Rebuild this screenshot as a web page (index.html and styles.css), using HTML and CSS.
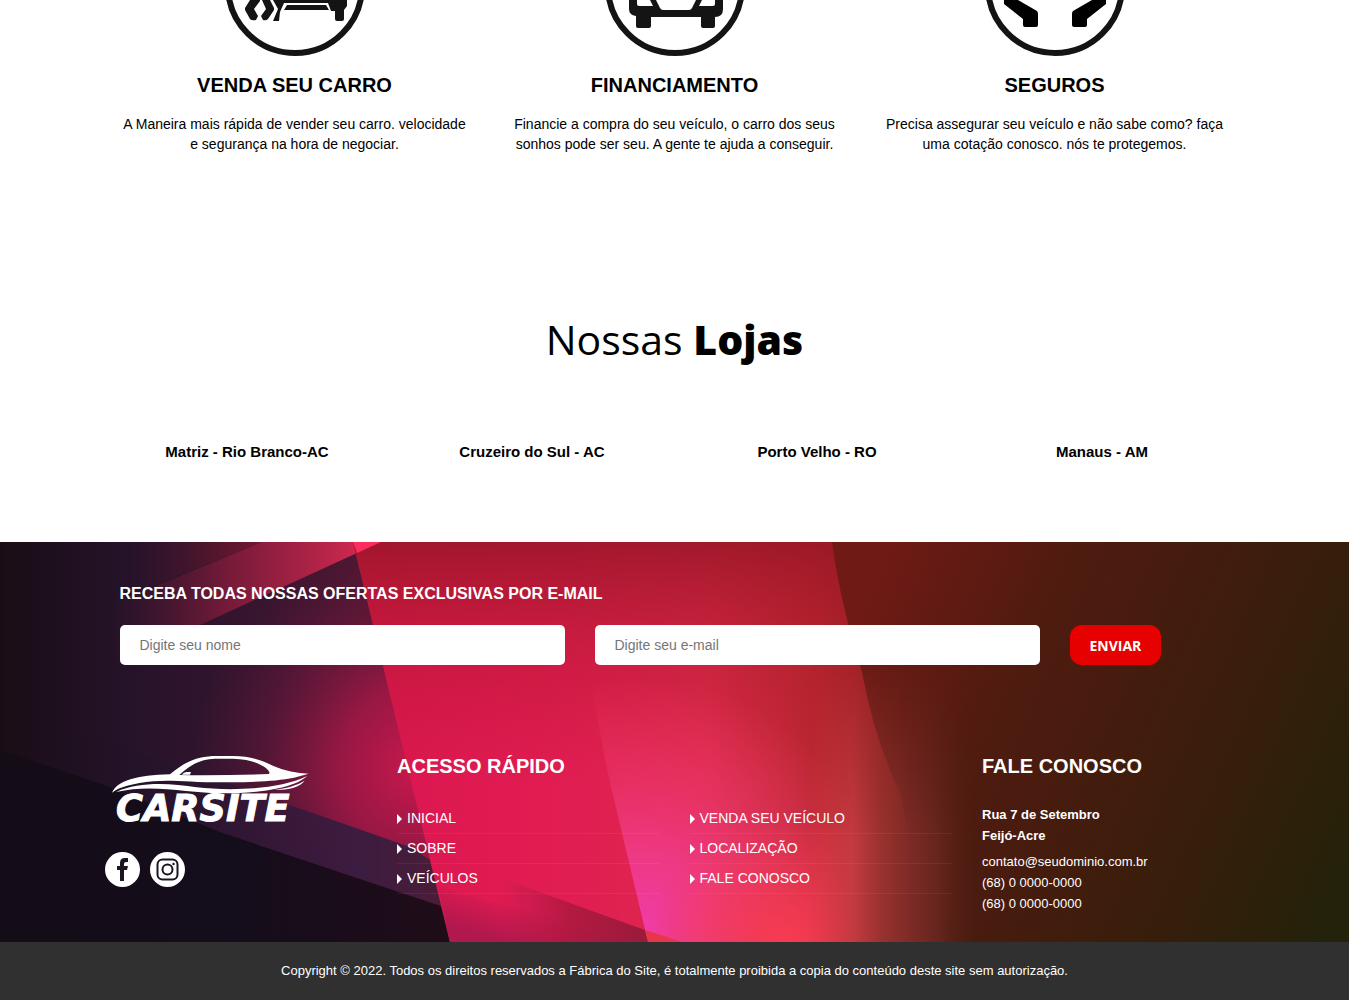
FILE: index.html
```html
<!DOCTYPE html>
<html lang="pt-br">
<head>
    <meta charset="UTF-8">
    <meta name="viewport" content="width=device-width, initial-scale=1.0">
    <title>Carsite</title>
    <link rel="stylesheet" href="styles.css">
</head>
<body>
    <main>
        <section class="container servicos">
            <div class="servico">
                <svg class="servico-icone" viewBox="0 0 140 56" aria-hidden="true">
                    <circle cx="70" cy="-14" r="67" fill="none" stroke="#141414" stroke-width="6"/>
                    <path d="M25 0L20 8V10L25 19Q27 21 31 20L33 16L29 9L35 1V0ZM37 0L41 9L36 16L38 20Q41 21 43 19L49 10V8L45 0Z" fill="#141414"/>
                    <path d="M48 0H122V6L119 10V19Q119 21 117 21H112Q110 21 110 19V11H106L103 3H59L55 12L54 21H48L53 9ZM62 5H101L104 10H59Z" fill="#141414"/>
                </svg>
                <h3>VENDA SEU CARRO</h3>
                <p>A Maneira mais rápida de vender seu carro. velocidade e segurança na hora de negociar.</p>
            </div>
            <div class="servico">
                <svg class="servico-icone" viewBox="0 0 140 56" aria-hidden="true">
                    <circle cx="70" cy="-14" r="67" fill="none" stroke="#141414" stroke-width="6"/>
                    <path d="M24 0H32V4Q32 6 34 6H48L45 0H51L55 8Q56 10 58 10H84Q86 10 87 8L91 0H97L94 6H108Q110 6 110 4V0H118V9Q118 17 110 17V26Q110 28 108 28H98Q96 28 96 26V17H46V26Q46 28 44 28H33Q31 28 31 26V16Q24 15 24 9Z" fill="#141414"/>
                </svg>
                <h3>FINANCIAMENTO</h3>
                <p>Financie a compra do seu veículo, o carro dos seus sonhos pode ser seu. A gente te ajuda a conseguir.</p>
            </div>
            <div class="servico">
                <svg class="servico-icone" viewBox="0 0 140 56" aria-hidden="true">
                    <circle cx="70" cy="-14" r="67" fill="none" stroke="#141414" stroke-width="6"/>
                    <path d="M19 0H33L52 11Q53 12 53 14V25Q53 27 51 27H40Q38 27 38 25V19L19 4ZM121 0H107L88 11Q87 12 87 14V25Q87 27 89 27H100Q102 27 102 25V19L121 4Z"/>
                </svg>
                <h3>SEGUROS</h3>
                <p>Precisa assegurar seu veículo e não sabe como? faça uma cotação conosco. nós te protegemos.</p>
            </div>
        </section>

        <section class="container lojas">
            <h2>Nossas <strong>Lojas</strong></h2>
            <ul class="lojas-lista">
                <li>Matriz - Rio Branco-AC</li>
                <li>Cruzeiro do Sul - AC</li>
                <li>Porto Velho - RO</li>
                <li>Manaus - AM</li>
            </ul>
        </section>
    </main>

    <footer>
        <div class="rodape">
            <svg class="rodape-fundo" viewBox="0 0 1349 400" preserveAspectRatio="none" aria-hidden="true">
                <defs>
                    <linearGradient id="base" gradientUnits="userSpaceOnUse" x1="0" y1="0" x2="450" y2="0">
                        <stop offset="0" stop-color="#190d15"/>
                        <stop offset=".3" stop-color="#26132a"/>
                        <stop offset=".6" stop-color="#38152f"/>
                        <stop offset="1" stop-color="#641834"/>
                    </linearGradient>
                    <radialGradient id="clarao" gradientUnits="userSpaceOnUse" cx="420" cy="225" r="230">
                        <stop offset="0" stop-color="#cc184e"/>
                        <stop offset=".35" stop-color="#aa1848" stop-opacity=".8"/>
                        <stop offset=".7" stop-color="#7c183f" stop-opacity=".35"/>
                        <stop offset="1" stop-color="#60183c" stop-opacity="0"/>
                    </radialGradient>
                    <linearGradient id="feixe" gradientUnits="userSpaceOnUse" x1="110" y1="0" x2="380" y2="0">
                        <stop offset="0" stop-color="#5c1830" stop-opacity="0"/>
                        <stop offset=".45" stop-color="#8a1c3c" stop-opacity=".8"/>
                        <stop offset="1" stop-color="#e02a54"/>
                    </linearGradient>
                    <linearGradient id="feixe2" gradientUnits="userSpaceOnUse" x1="130" y1="0" x2="270" y2="0">
                        <stop offset="0" stop-color="#4c1428" stop-opacity="0"/>
                        <stop offset="1" stop-color="#7c192f"/>
                    </linearGradient>
                    <linearGradient id="faixa" gradientUnits="userSpaceOnUse" x1="60" y1="0" x2="440" y2="0">
                        <stop offset="0" stop-color="#1a0f20" stop-opacity="0"/>
                        <stop offset=".45" stop-color="#2c1634" stop-opacity=".8"/>
                        <stop offset=".8" stop-color="#3c1c40"/>
                        <stop offset="1" stop-color="#4c1c38"/>
                    </linearGradient>
                    <linearGradient id="chao" gradientUnits="userSpaceOnUse" x1="0" y1="0" x2="450" y2="0">
                        <stop offset="0" stop-color="#140c16"/>
                        <stop offset=".5" stop-color="#140d1b"/>
                        <stop offset="1" stop-color="#200c19"/>
                    </linearGradient>
                    <linearGradient id="rosa" gradientUnits="userSpaceOnUse" x1="350" y1="0" x2="900" y2="0">
                        <stop offset="0" stop-color="#db1650"/>
                        <stop offset=".4" stop-color="#e11d52"/>
                        <stop offset=".65" stop-color="#dd2a4c"/>
                        <stop offset=".85" stop-color="#b82830"/>
                        <stop offset="1" stop-color="#842420"/>
                    </linearGradient>
                    <linearGradient id="topo" x1="0" y1="0" x2="0" y2="1">
                        <stop offset="0" stop-color="#981626" stop-opacity=".85"/>
                        <stop offset=".25" stop-color="#a81828" stop-opacity=".4"/>
                        <stop offset=".6" stop-color="#b01828" stop-opacity="0"/>
                    </linearGradient>
                    <linearGradient id="escuro" gradientUnits="userSpaceOnUse" x1="840" y1="100" x2="1349" y2="330">
                        <stop offset="0" stop-color="#701a15"/>
                        <stop offset=".3" stop-color="#501b10"/>
                        <stop offset=".65" stop-color="#3c1d0c"/>
                        <stop offset="1" stop-color="#24220a"/>
                    </linearGradient>
                    <linearGradient id="brilho" gradientUnits="userSpaceOnUse" x1="810" y1="0" x2="980" y2="0">
                        <stop offset="0" stop-color="#e04048" stop-opacity="0"/>
                        <stop offset=".25" stop-color="#c43a40"/>
                        <stop offset=".42" stop-color="#98322e"/>
                        <stop offset=".6" stop-color="#7c2a26"/>
                        <stop offset=".75" stop-color="#66251f"/>
                        <stop offset="1" stop-color="#501f14" stop-opacity="0"/>
                    </linearGradient>
                    <linearGradient id="subida" x1="0" y1="0" x2="0" y2="1">
                        <stop offset=".3" stop-color="#000"/>
                        <stop offset=".75" stop-color="#fff"/>
                    </linearGradient>
                    <mask id="mascara"><rect width="1349" height="400" fill="url(#subida)"/></mask>
                    <radialGradient id="magenta" gradientUnits="userSpaceOnUse" cx="640" cy="385" r="250">
                        <stop offset="0" stop-color="#f03ca8"/>
                        <stop offset=".3" stop-color="#f03c8c" stop-opacity=".85"/>
                        <stop offset=".6" stop-color="#ee3a74" stop-opacity=".5"/>
                        <stop offset="1" stop-color="#ee3a60" stop-opacity="0"/>
                    </radialGradient>
                    <radialGradient id="coral" gradientUnits="userSpaceOnUse" cx="785" cy="410" r="140">
                        <stop offset="0" stop-color="#fa3c50"/>
                        <stop offset="1" stop-color="#f03c50" stop-opacity="0"/>
                    </radialGradient>
                    <linearGradient id="cunha" gradientUnits="userSpaceOnUse" x1="500" y1="0" x2="640" y2="0">
                        <stop offset="0" stop-color="#b0184a" stop-opacity="0"/>
                        <stop offset=".5" stop-color="#a8183e" stop-opacity=".8"/>
                        <stop offset="1" stop-color="#9c1a3c"/>
                    </linearGradient>
                    <linearGradient id="cunha2" gradientUnits="userSpaceOnUse" x1="480" y1="350" x2="468" y2="390">
                        <stop offset="0" stop-color="#b0184e" stop-opacity="0"/>
                        <stop offset="1" stop-color="#b0184e"/>
                    </linearGradient>
                </defs>
                <rect width="1349" height="400" fill="url(#base)"/>
                <rect x="180" width="270" height="400" fill="url(#clarao)"/>
                <path d="M262 0L100 65V0Z" fill="url(#feixe2)"/>
                <path d="M381 0L200 83L100 125V67L262 0Z" fill="url(#feixe)"/>
                <path d="M0 160L190 228L410 305L430 318L441 364L220 290L110 245L0 208Z" fill="url(#faixa)"/>
                <path d="M0 208L110 245L220 290L441 364L450 400H0Z" fill="url(#chao)"/>
                <path d="M353 0H940V400H450Z" fill="url(#rosa)"/>
                <path d="M353 0H940V400H450Z" fill="url(#topo)"/>
                <path d="M353 0H381L357 11Z" fill="#f92e5e"/>
                <path d="M590 130Q600 200 617 270L648 400H890V130Z" fill="url(#magenta)"/>
                <path d="M648 240H940V400H648Z" fill="url(#coral)"/>
                <path d="M832 0Q840 60 862 130Q875 200 900 250L930 400H1349V0Z" fill="url(#escuro)"/>
                <rect x="810" width="170" height="400" fill="url(#brilho)" mask="url(#mascara)"/>
                <path d="M438 345L530 370L620 400H450Z" fill="url(#cunha2)"/>
                <path d="M500 336L645 388L648 400H500Z" fill="url(#cunha)"/>
                <path d="M645 388L682 400H648Z" fill="#e8354a"/>
            </svg>

            <div class="container rodape-conteudo">
                <form class="newsletter">
                    <h4>RECEBA TODAS NOSSAS OFERTAS EXCLUSIVAS POR E-MAIL</h4>
                    <div class="newsletter-campos">
                        <input type="text" name="nome" placeholder="Digite seu nome" aria-label="Digite seu nome">
                        <input type="email" name="email" placeholder="Digite seu e-mail" aria-label="Digite seu e-mail">
                        <div><button type="submit">ENVIAR</button></div>
                    </div>
                </form>

                <div class="colunas">
                    <div class="marca">
                        <a href="index.html" aria-label="Carsite">
                            <svg class="logo" viewBox="45 30 630 225" fill="#fff">
                                <path fill-rule="evenodd" d="M66 158C82 122 140 106 240 103C290 60 330 48 380 48H430C480 48 520 62 550 78C585 93 620 100 656 101L612 113C560 123 500 126 420 127C300 128 250 118 190 124C130 130 90 140 66 158ZM268 105C300 75 330 57 375 56H430C480 57 512 72 530 86C540 95 540 100 536 102Q400 107 268 105Z"/>
                                <path d="M275 104Q282 96 290 96H303L300 104Z"/>
                                <path d="M78 156C150 124 240 130 320 142C410 152 560 152 652 108C610 146 500 160 400 160C290 160 190 130 78 156Z"/>
                                <path d="M552 149Q610 143 644 122Q620 152 552 149Z"/>
                                <text class="logo-texto" x="78" y="242">CARSITE</text>
                            </svg>
                        </a>
                        <div class="redes">
                            <a href="#" aria-label="Facebook">
                                <svg viewBox="0 0 35 35">
                                    <circle cx="17.500" cy="17.500" r="17.500" fill="#fff"/>
                                    <path d="M15 29V18H12V14H15V11Q15 6 20 6H23V10H21Q19 10 19 12V14H23L22 18H19V29Z" fill="#1c1520"/>
                                </svg>
                            </a>
                            <a href="#" aria-label="Instagram">
                                <svg viewBox="0 0 35 35" fill="none" stroke="#1c1520" stroke-width="2">
                                    <circle cx="17.500" cy="17.500" r="17.500" fill="#fff" stroke="none"/>
                                    <rect x="7.500" y="7.500" width="20" height="20" rx="5"/>
                                    <circle cx="17.500" cy="17.500" r="5"/>
                                    <circle cx="23.500" cy="12" r="1.200" fill="#1c1520" stroke="none"/>
                                </svg>
                            </a>
                        </div>
                    </div>
                    <nav class="acesso">
                        <h3>ACESSO RÁPIDO</h3>
                        <ul>
                            <li><a href="index.html">INICIAL</a></li>
                            <li><a href="venda.html">VENDA SEU VEÍCULO</a></li>
                            <li><a href="sobre.html">SOBRE</a></li>
                            <li><a href="localizacao.html">LOCALIZAÇÃO</a></li>
                            <li><a href="veiculos.html">VEÍCULOS</a></li>
                            <li><a href="contato.html">FALE CONOSCO</a></li>
                        </ul>
                    </nav>
                    <div class="contato">
                        <h3>FALE CONOSCO</h3>
                        <p><strong>Rua 7 de Setembro<br>Feijó-Acre</strong></p>
                        <p>contato@seudominio.com.br<br>(68) 0 0000-0000<br>(68) 0 0000-0000</p>
                    </div>
                </div>
            </div>
        </div>
        <div class="copyright">Copyright © 2022. Todos os direitos reservados a Fábrica do Site, é totalmente proibida a copia do conteúdo deste site sem autorização.</div>
    </footer>
</body>
</html>
```

FILE: styles.css
```css
* {
    box-sizing: border-box;
}
body {
    margin: 0;
    font-family: "Liberation Sans", Arial, sans-serif;
    font-size: 14px;
    line-height: 20px;
    color: #000;
    background-color: #fff;
}
h2, h3, h4, p, ul {
    margin: 0;
    padding: 0;
}
ul {
    list-style: none;
}
a {
    color: #fff;
    text-decoration: none;
}
.container {
    max-width: 1140px;
    margin: 0 auto;
}

/* servicos */
.servicos {
    display: grid;
    grid-template-columns: repeat(3, 1fr);
    text-align: center;
}
.servico {
    padding: 0 15px;
}
.servico-icone {
    display: block;
    width: 140px;
    height: 56px;
    margin: 0 auto 16px;
}
.servico h3 {
    font-size: 20px;
    line-height: 26px;
    margin-bottom: 16px;
}

/* lojas */
.lojas {
    padding: 155px 0 80px;
    text-align: center;
}
.lojas h2 {
    font-family: "Open Sans", sans-serif;
    font-size: 41px;
    font-weight: 400;
    line-height: 60px;
    margin-bottom: 73px;
}
.lojas h2 strong {
    font-weight: 800;
}
.lojas-lista {
    display: grid;
    grid-template-columns: repeat(4, 1fr);
    font-size: 15px;
    font-weight: bold;
}

/* rodape */
.rodape {
    position: relative;
    color: #fff;
    background-color: #190d15;
}
.rodape-fundo {
    position: absolute;
    top: 0;
    left: 0;
    width: 100%;
    height: 100%;
}
.rodape-conteudo {
    position: relative;
    padding: 42px 0 23px;
}
.newsletter {
    padding: 0 15px;
}
.newsletter h4 {
    font-size: 16px;
    margin-bottom: 21px;
}
.newsletter-campos {
    display: grid;
    grid-template-columns: minmax(0, 445px) minmax(0, 445px) auto;
    gap: 30px;
}
.newsletter input {
    width: 100%;
    height: 40px;
    padding: 0 20px;
    border: 0;
    border-radius: 5px;
    font-family: inherit;
    font-size: 14px;
    background-color: #fff;
}
.newsletter input::placeholder {
    color: #757575;
}
.newsletter button {
    height: 40px;
    padding: 0 20px;
    border: 0;
    border-radius: 12px;
    font-family: "Open Sans", sans-serif;
    font-size: 14px;
    font-weight: 700;
    color: #fff;
    background-color: #e60000;
    cursor: pointer;
}
.colunas {
    display: grid;
    grid-template-columns: repeat(4, 1fr);
    column-gap: 30px;
    padding-top: 85px;
}
.logo {
    display: block;
    width: 210px;
    height: 75px;
    margin-bottom: 27px;
    overflow: visible;
}
.logo-texto {
    font-family: "DejaVu Sans", sans-serif;
    font-size: 110px;
    font-weight: bold;
    font-style: italic;
    stroke: #fff;
    stroke-width: 3px;
}
.redes {
    display: flex;
    gap: 10px;
}
.redes svg {
    display: block;
    width: 35px;
    height: 35px;
}
.acesso {
    grid-column: span 2;
}
.colunas h3 {
    font-size: 20px;
    line-height: 32px;
    margin-bottom: 22px;
}
.acesso ul {
    display: grid;
    grid-template-columns: repeat(2, 1fr);
    column-gap: 30px;
}
.acesso li {
    border-bottom: 1px solid rgba(255, 255, 255, 0.06);
}
.acesso li a {
    display: flex;
    align-items: center;
    gap: 5px;
    line-height: 29px;
}
.acesso li a::before {
    content: "";
    border: 5px solid transparent;
    border-left-color: #fff;
    border-right: 0;
}
.contato p {
    font-size: 13px;
    line-height: 21px;
    margin-bottom: 5px;
}
.copyright {
    padding: 20px 0;
    font-size: 13px;
    line-height: 18px;
    text-align: center;
    color: #fff;
    background-color: #303030;
}
```
